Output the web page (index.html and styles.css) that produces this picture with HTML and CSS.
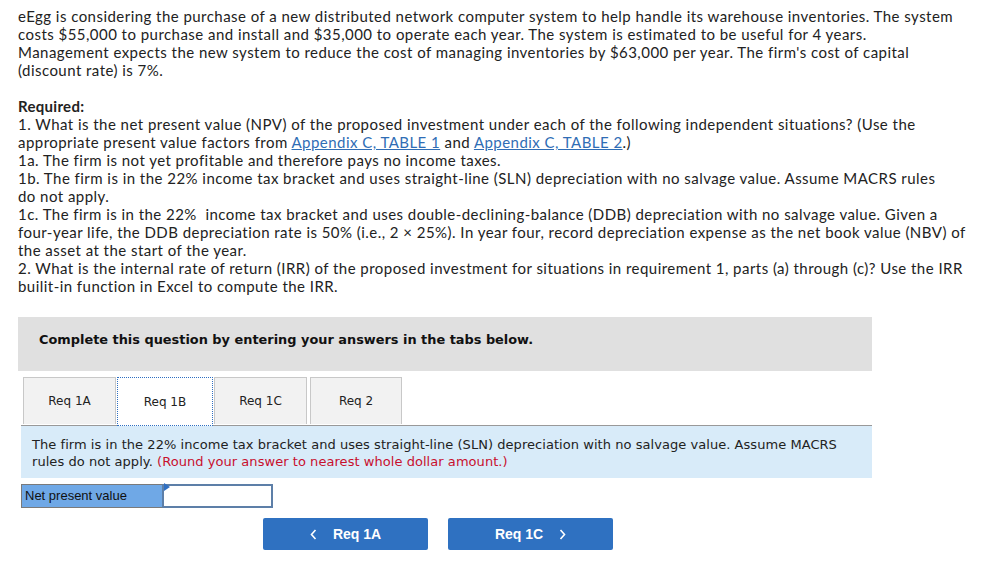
FILE: index.html
```html
<!DOCTYPE html>
<html>
<head>
<meta charset="utf-8">
<link rel="stylesheet" href="styles.css">
</head>
<body>
<div class="page">
  <p class="q">eEgg is considering the purchase of a new distributed network computer system to help handle its warehouse inventories. The system<br>costs $55,000 to purchase and install and $35,000 to operate each year. The system is estimated to be useful for 4 years.<br>Management expects the new system to reduce the cost of managing inventories by $63,000 per year. The firm's cost of capital<br>(discount rate) is 7%.</p>
  <p class="q"><b>Required:</b><br>1. What is the net present value (NPV) of the proposed investment under each of the following independent situations? (Use the<br>appropriate present value factors from <a class="lnk">Appendix C, TABLE 1</a> and <a class="lnk">Appendix C, TABLE 2</a>.)<br>1a. The firm is not yet profitable and therefore pays no income taxes.<br>1b. The firm is in the 22% income tax bracket and uses straight-line (SLN) depreciation with no salvage value. Assume MACRS rules<br>do not apply.<br>1c. The firm is in the 22%&nbsp; income tax bracket and uses double-declining-balance (DDB) depreciation with no salvage value. Given a<br>four-year life, the DDB depreciation rate is 50% (i.e., 2 × 25%). In year four, record depreciation expense as the net book value (NBV) of<br>the asset at the start of the year.<br>2. What is the internal rate of return (IRR) of the proposed investment for situations in requirement 1, parts (a) through (c)? Use the IRR<br>builit-in function in Excel to compute the IRR.</p>

  <div class="banner">Complete this question by entering your answers in the tabs below.</div>

  <div class="tabs">
    <div class="tab">Req 1A</div>
    <div class="tab active">Req 1B</div>
    <div class="tab">Req 1C</div>
    <div class="tab">Req 2</div>
  </div>
  <div class="info">The firm is in the 22% income tax bracket and uses straight-line (SLN) depreciation with no salvage value. Assume MACRS<br>rules do not apply. <span class="red">(Round your answer to nearest whole dollar amount.)</span></div>

  <div class="npv">
    <div class="npv-label">Net present value</div>
    <div class="npv-input"><span class="flag"></span></div>
  </div>

  <div class="nav">
    <div class="btn"><svg class="chev" width="7" height="11" viewBox="0 0 7 11"><path d="M5.5 1 L1.5 5.5 L5.5 10" fill="none" stroke="#fff" stroke-width="1.6"/></svg><span>Req 1A</span></div>
    <div class="btn"><span>Req 1C</span><svg class="chev" width="7" height="11" viewBox="0 0 7 11"><path d="M1.5 1 L5.5 5.5 L1.5 10" fill="none" stroke="#fff" stroke-width="1.6"/></svg></div>
  </div>
</div>
</body>
</html>
```
FILE: styles.css
```css
html, body { margin: 0; padding: 0; background: #fff; }
.page { padding: 7px 0 0 18px; }
.q {
  margin: 0 0 18px 0;
  font-family: Lato, "Open Sans", sans-serif;
  font-size: 15px;
  line-height: 18px;
  letter-spacing: 0.46px;
  color: #222;
  white-space: nowrap;
}
.q b { font-weight: 700; letter-spacing: 0.3px; }
.lnk { color: #2f6db5; text-decoration: underline; }
.banner {
  margin-top: 22px;
  width: 854px;
  height: 54px;
  box-sizing: border-box;
  padding: 14px 0 0 21px;
  background: #e0e0e0;
  font-family: "DejaVu Sans", Verdana, sans-serif;
  font-weight: bold;
  font-size: 12.9px;
  line-height: 17px;
  color: #111;
}
.tabs {
  margin: 6px 0 0 3px;
  width: 851px;
  display: flex;
  gap: 1px;
  border-bottom: 1px solid #999;
  padding-left: 2px;
  box-sizing: border-box;
}
.tab {
  width: 93px;
  height: 47px;
  box-sizing: border-box;
  border: 1px solid #c8c8c8;
  border-bottom: none;
  background: #f2f2f2;
  display: flex;
  align-items: center;
  justify-content: center;
  font-family: "DejaVu Sans", Verdana, sans-serif;
  font-size: 12px;
  color: #222;
}
.tab.active {
  width: 96px;
  background: #fff;
  border: 1px dotted #2f6fc2;
  height: 49px;
  margin-bottom: -1px;
}
.tab:nth-child(4) { margin-left: 2px; width: 92px; }
.info {
  margin-left: 3px;
  width: 851px;
  height: 52px;
  box-sizing: border-box;
  padding: 10px 0 0 11px;
  background: #d8ebf9;
  font-family: "DejaVu Sans", Verdana, sans-serif;
  font-size: 13px;
  line-height: 17px;
  letter-spacing: 0.05px;
  color: #222;
  white-space: nowrap;
}
.red { color: #c8102e; }
.npv {
  margin: 6px 0 0 3px;
  display: flex;
  height: 24px;
}
.npv-label {
  width: 141px;
  box-sizing: border-box;
  background: #6fa8e6;
  border: 1px solid #7a7a7a;
  border-right: none;
  font-family: "Liberation Sans", Arial, sans-serif;
  font-size: 13px;
  line-height: 22px;
  padding-left: 3px;
  color: #111;
}
.npv-input {
  position: relative;
  width: 111px;
  box-sizing: border-box;
  background: #fff;
  border: 2px solid #5d7fa8;
}
.flag {
  position: absolute;
  left: 0;
  top: 0;
  width: 0;
  height: 0;
  border-top: 4px solid transparent;
  border-bottom: 4px solid transparent;
  border-left: 6px solid #2f6fc2;
  transform: translateY(-3px);
}
.nav {
  margin: 10px 0 0 245px;
  display: flex;
  gap: 20px;
}
.btn {
  width: 165px;
  height: 32px;
  border-radius: 2px;
  background: #2f71c1;
  color: #fff;
  display: flex;
  align-items: center;
  justify-content: center;
  gap: 16px;
  font-family: "Liberation Sans", Arial, sans-serif;
  font-weight: bold;
  font-size: 14px;
}
.chev { display: block; }
```
